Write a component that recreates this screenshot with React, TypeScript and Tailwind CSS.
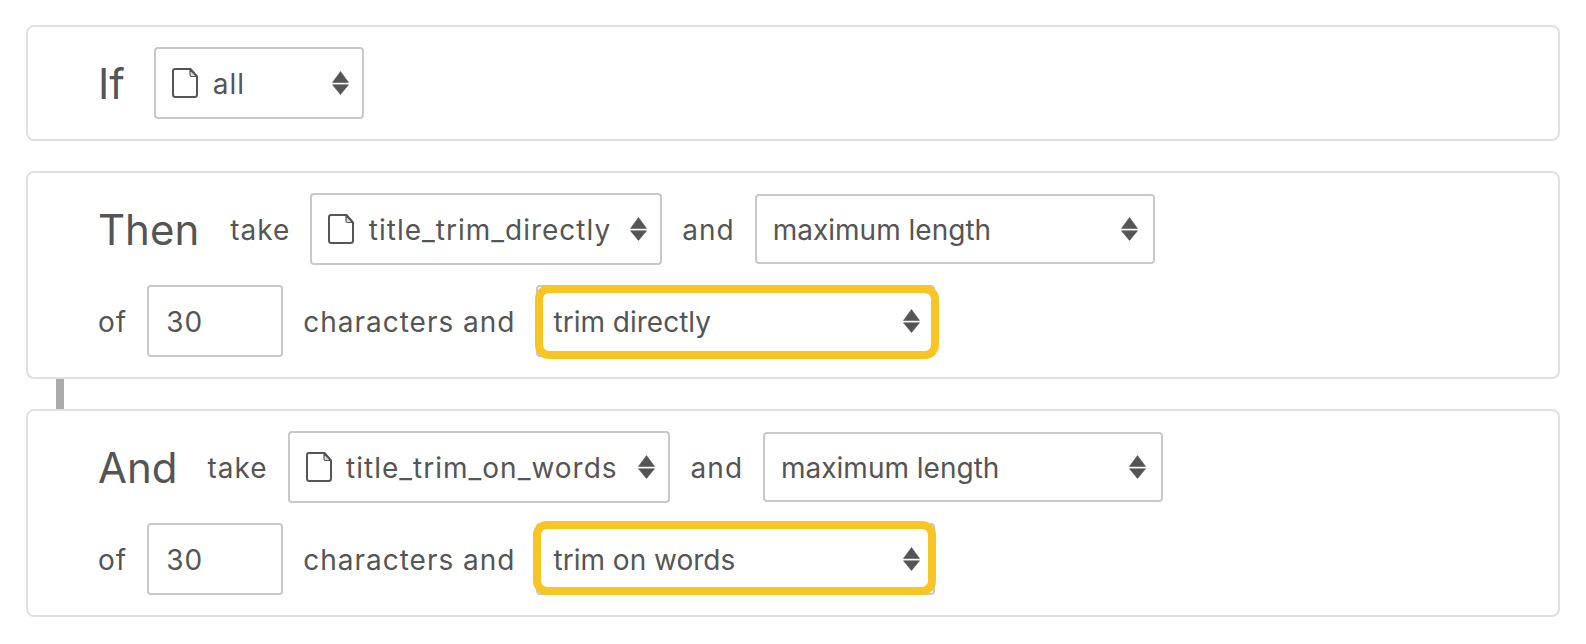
const FileIcon = () => (
  <svg width="26" height="30" viewBox="0 0 26 30" fill="none" className="shrink-0 text-[#555]">
    <path
      d="M3 1h15.5L25 8.5V26.5a2.5 2.5 0 0 1-2.5 2.5H3.5A2.5 2.5 0 0 1 1 26.5V3a2 2 0 0 1 2-2Z"
      stroke="currentColor"
      strokeWidth="2"
      strokeLinejoin="round"
    />
    <path d="M18 1.5V7a1.5 1.5 0 0 0 1.5 1.5H24.5Z" fill="#ddd" stroke="currentColor" strokeWidth="1.2" strokeLinejoin="round" />
  </svg>
)

const Arrows = () => (
  <svg width="17" height="24" viewBox="0 0 17 24" className="shrink-0 text-[#555]" fill="currentColor">
    <path d="M8.5 0.5 16.5 11.4H0.5Z" stroke="currentColor" strokeWidth="0.6" strokeLinejoin="round" />
    <path d="M8.5 23.5 0.5 13.8H16.5Z" stroke="currentColor" strokeWidth="0.6" strokeLinejoin="round" />
  </svg>
)

const Select = ({
  label,
  icon,
  className = '',
  labelClass = '',
  children,
}: {
  label: string
  icon?: boolean
  className?: string
  labelClass?: string
  children?: React.ReactNode
}) => (
  <div
    className={`relative flex shrink-0 items-center rounded-[4px] border-2 border-[#c9c9c9] pl-[16px] ${className}`}
  >
    {icon && <FileIcon />}
    <span className={`grow pt-[2px] ${labelClass}`}>{label}</span>
    <Arrows />
    {children}
  </div>
)

const NumberBox = () => (
  <div className="flex h-[72px] w-[136px] shrink-0 items-center rounded-[4px] border-2 border-[#c9c9c9] pt-[2px] pl-[17px]">
    30
  </div>
)

const Card = ({ children }: { children: React.ReactNode }) => (
  <div className="flex flex-col gap-[20px] rounded-[8px] border-2 border-[#e0e0e0] py-[20px] pl-[70px]">
    {children}
  </div>
)

const Row = ({ children }: { children: React.ReactNode }) => (
  <div className="flex h-[72px] items-center">{children}</div>
)

export default function App() {
  return (
    <div className="h-[644px] w-[1586px] overflow-hidden bg-white pt-[25px] pr-[26px] pl-[26px] font-['Inter',sans-serif] text-[28px] tracking-[1px] text-[#555] antialiased">
      <Card>
        <Row>
          <span className="mr-[29px] text-[42px] tracking-normal">If</span>
          <Select label="all" icon labelClass="ml-[15px]" className="h-[72px] w-[210px] pr-[13px]" />
        </Row>
      </Card>
      <div className="h-[30px]" />
      <Card>
        <Row>
          <span className="mr-[31px] text-[42px] tracking-normal">Then</span>
          <span className="mr-[20px] pt-[2px]">take</span>
          <Select label="title_trim_directly" icon labelClass="ml-[14.5px]" className="h-[72px] w-[352px] pr-[13px]" />
          <span className="mr-[20px] ml-[20px] pt-[2px]">and</span>
          <Select label="maximum length" labelClass="tracking-normal" className="h-[70px] w-[400px] pr-[15px]" />
        </Row>
        <Row>
          <span className="mr-[20px] pt-[2px]">of</span>
          <NumberBox />
          <span className="mx-[20px] pt-[2px]">characters and</span>
          <Select label="trim directly" labelClass="tracking-normal" className="h-[72px] w-[399px] pr-[13px]">
            <div className="absolute -top-[2px] -right-[6px] -bottom-[4px] -left-[3px] rounded-[14px] border-[8px] border-[#f8c524]" />
          </Select>
        </Row>
      </Card>
      <div className="ml-[30px] h-[30px] w-[8px] bg-[#aaaaaa]" />
      <Card>
        <Row>
          <span className="mr-[30px] text-[42px] tracking-normal">And</span>
          <span className="mr-[20px] pt-[2px]">take</span>
          <Select label="title_trim_on_words" icon labelClass="ml-[14.5px]" className="h-[72px] w-[382px] pr-[13px]" />
          <span className="mr-[20px] ml-[21px] pt-[2px]">and</span>
          <Select label="maximum length" labelClass="tracking-normal" className="h-[70px] w-[400px] pr-[15px]" />
        </Row>
        <Row>
          <span className="mr-[20px] pt-[2px]">of</span>
          <NumberBox />
          <span className="mx-[20px] pt-[2px]">characters and</span>
          <Select label="trim on words" labelClass="tracking-normal" className="h-[72px] w-[399px] pr-[13px]">
            <div className="absolute -top-[4px] -right-[3px] -bottom-[2px] -left-[5px] rounded-[14px] border-[8px] border-[#f8c524]" />
          </Select>
        </Row>
      </Card>
    </div>
  )
}
